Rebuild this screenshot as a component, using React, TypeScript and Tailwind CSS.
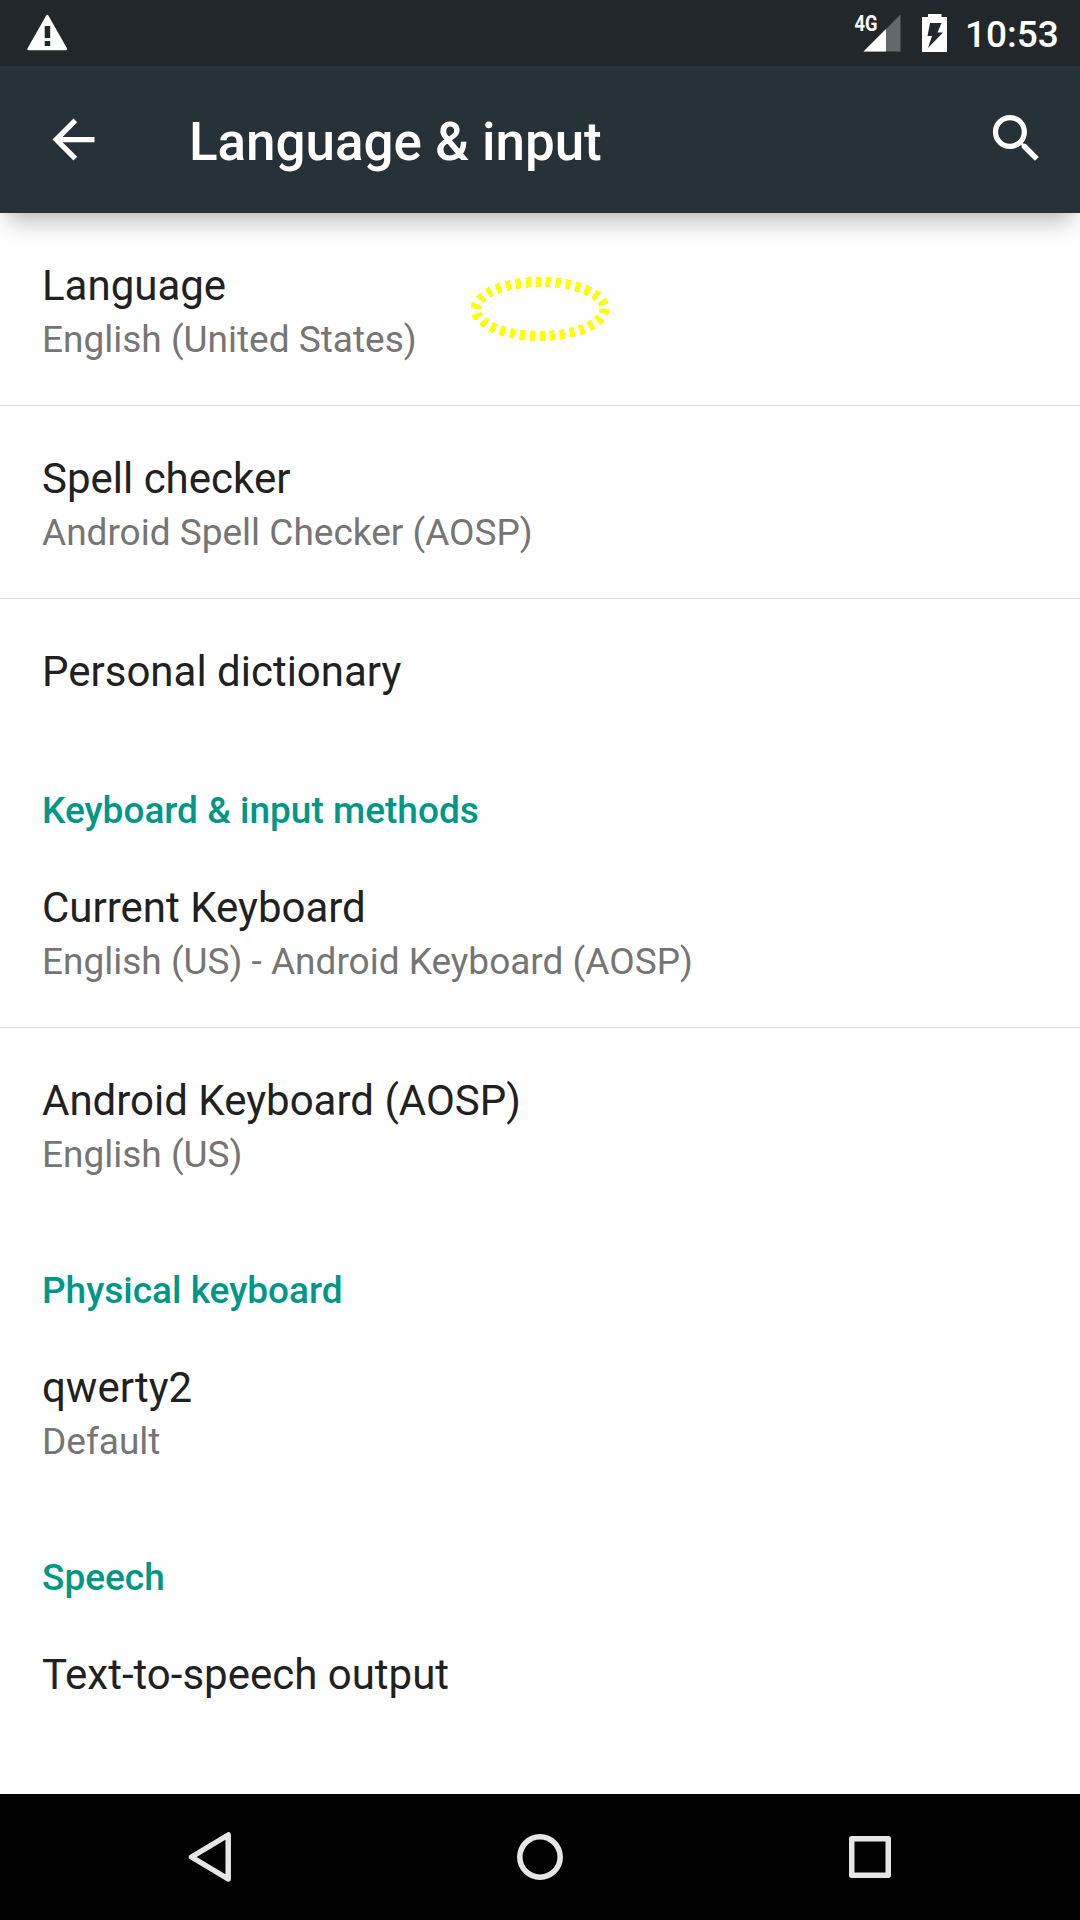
import React from "react";

function Row({
  title,
  summary,
  divider = false,
  className = "h-[193px]",
}: {
  title: string;
  summary?: string;
  divider?: boolean;
  className?: string;
}) {
  return (
    <div className={`flex shrink-0 flex-col pl-[42px] pt-[45px] ${divider ? "border-b border-[#dedede]" : ""} ${className}`}>
      <div className="h-[56px] text-[42px] leading-[56px] text-[#212121]">{title}</div>
      {summary && <div className="h-[51px] text-[37px] leading-[51px] text-[#757575]">{summary}</div>}
    </div>
  );
}

function Header({ children }: { children: React.ReactNode }) {
  return (
    <h2 className="h-[94px] shrink-0 pl-[42px] pt-[45px] text-[37px] font-medium leading-[49px] text-[#009688]">
      {children}
    </h2>
  );
}

export default function App() {
  return (
    <div className="relative flex h-[1920px] w-[1080px] flex-col overflow-hidden whitespace-nowrap bg-white font-['Roboto',sans-serif]">
      <header className="z-10 shrink-0 bg-[#263238] shadow-[0_2px_4px_rgba(0,0,0,0.04),0_19px_20px_-8px_rgba(0,0,0,0.22)]">
        <div className="flex h-[66px] items-center bg-[#21272b]">
          <svg className="ml-[26px]" width="42" height="66" viewBox="26 0 42 66">
            <path d="M47.3 16L66 49H28.500Z" fill="#fff" stroke="#fff" strokeWidth="2.500" strokeLinejoin="round" />
            <path d="M44.700 26h5.500v12h-5.500zM44.700 41h5.500v5h-5.500z" fill="#21272b" />
          </svg>
          <svg className="ml-auto" width="110" height="66" viewBox="850 0 110 66">
            <path d="M900.500 14.500V51.500H863.500Z" fill="#64686b" />
            <path d="M886 29V51.500H863.500Z" fill="#fff" />
            <text x="854.500" y="31" fontSize="22" fontWeight="700" fill="#fff" textLength="23" lengthAdjust="spacingAndGlyphs">
              4G
            </text>
            <path d="M928 14h13.500v3H947v35h-25V17h6z" fill="#fff" />
            <path d="M930 23h11.500l-4 9.500h5.500l-15 15.500 4-12h-4.500z" fill="#21272b" />
          </svg>
          <div className="w-[120px] pl-[5px] pt-[4px] text-[37px] font-medium leading-[48px] text-white">10:53</div>
        </div>
        <div className="flex h-[147px] items-center">
          <svg className="ml-[42px]" width="63" height="63" viewBox="0 0 24 24" fill="#fff">
            <path d="M20 11H7.830l5.590-5.590L12 4l-8 8 8 8 1.410-1.410L7.830 13H20v-2z" />
          </svg>
          <h1 className="ml-[84px] pt-[6px] text-[53px] font-medium tracking-[-0.05px] text-white">Language &amp; input</h1>
          <svg className="mb-[2px] ml-auto mr-[32px]" width="63" height="63" viewBox="0 0 24 24" fill="#fff">
            <path d="M15.500 14h-.79l-.28-.27C15.410 12.590 16 11.110 16 9.500 16 5.910 13.090 3 9.500 3S3 5.910 3 9.500 5.910 16 9.500 16c1.610 0 3.090-.59 4.230-1.570l.27.28v.79l5 4.990L20.490 19l-4.990-5zm-6 0C7.010 14 5 11.990 5 9.500S7.010 5 9.500 5 14 7.010 14 9.500 11.990 14 9.500 14z" />
          </svg>
        </div>
      </header>

      <main className="flex min-h-0 flex-1 flex-col">
        <Row title="Language" summary="English (United States)" divider />
        <Row title="Spell checker" summary="Android Spell Checker (AOSP)" divider />
        <Row title="Personal dictionary" className="h-[142px]" />
        <Header>Keyboard &amp; input methods</Header>
        <Row title="Current Keyboard" summary="English (US) - Android Keyboard (AOSP)" divider />
        <Row title="Android Keyboard (AOSP)" summary="English (US)" />
        <Header>Physical keyboard</Header>
        <Row title="qwerty2" summary="Default" />
        <Header>Speech</Header>
        <Row title="Text-to-speech output" className="h-[142px]" />
      </main>

      <nav className="flex h-[126px] shrink-0 items-center justify-center gap-[266px] bg-black">
        <svg width="64" height="64" viewBox="0 0 64 64" fill="none" stroke="#e6e6e6" strokeWidth="5.500" strokeLinejoin="round">
          <path d="M50.200 10V54L13.500 32Z" />
        </svg>
        <svg width="64" height="64" viewBox="0 0 64 64" fill="none" stroke="#e6e6e6" strokeWidth="5.500">
          <circle cx="32" cy="32" r="20.200" />
        </svg>
        <svg width="64" height="64" viewBox="0 0 64 64" fill="none" stroke="#e6e6e6" strokeWidth="5.500" strokeLinejoin="round">
          <rect x="13.750" y="13.750" width="36.500" height="36.500" />
        </svg>
      </nav>

      <svg
        className="absolute left-[464px] top-[270px] z-20"
        width="152"
        height="78"
        viewBox="464 270 152 78"
        fill="none"
        stroke="#ffff00"
        strokeWidth="10"
        shapeRendering="crispEdges"
      >
        <ellipse cx="540" cy="309" rx="64.500" ry="27" strokeDasharray="5 5" />
      </svg>
    </div>
  );
}
